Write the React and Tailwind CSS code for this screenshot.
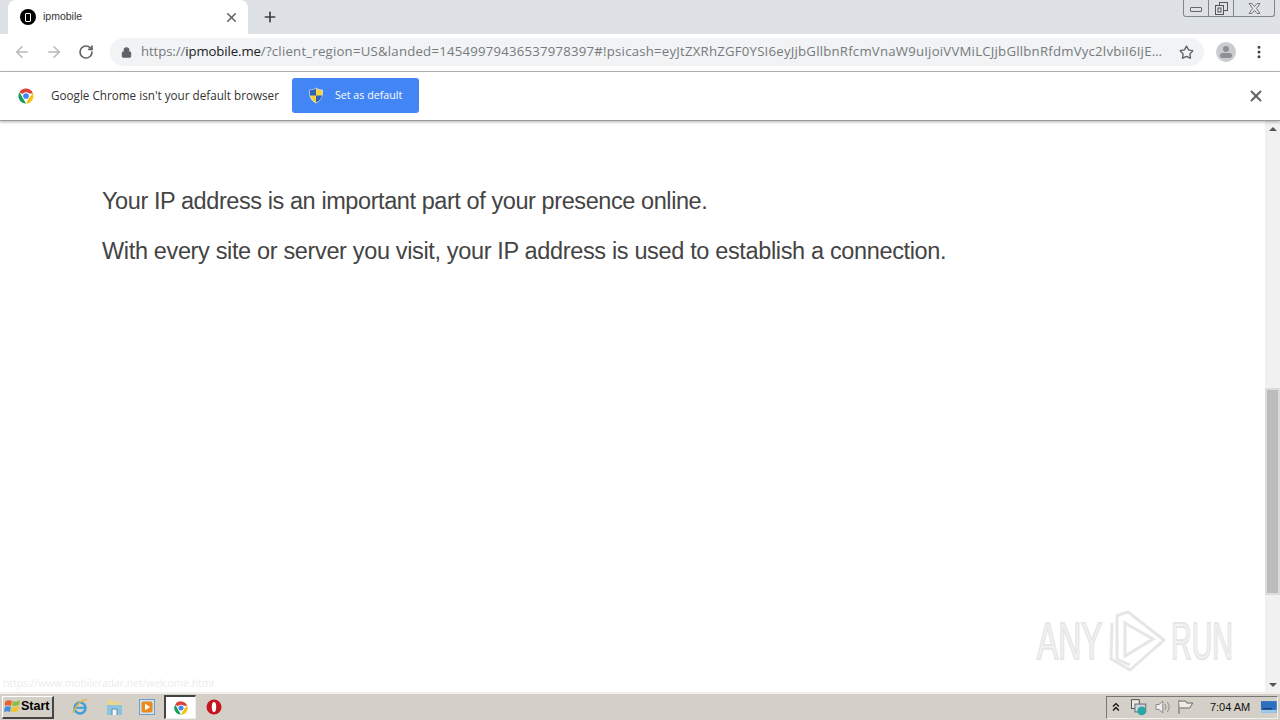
import { ArrowLeft, ArrowRight, RotateCw, Lock, Star, X, Plus, EllipsisVertical } from "lucide-react";

const URL_REST =
  "/?client_region=US&landed=14549979436537978397#!psicash=eyJtZXRhZGF0YSI6eyJjbGllbnRfcmVnaW9uIjoiVVMiLCJjbGllbnRfdmVyc2lvbiI6IjE…";

function ChromeLogo({ size = 18 }) {
  return (
    <svg width={size} height={size} viewBox="0 0 24 24">
      <path d="M12 12 L3.3 7 A10 10 0 0 1 21.3 8.5 L12 8.5 Z" fill="#db4437" />
      <path d="M12 22 A10 10 0 0 1 3.3 7 L8 15 Z" fill="#0f9d58" />
      <path d="M21.3 8.5 A10 10 0 0 1 12 22 L16 14 Z" fill="#f4c20d" />
      <circle cx="12" cy="12" r="5" fill="#fff" />
      <circle cx="12" cy="12" r="3.8" fill="#4285f4" />
    </svg>
  );
}

function ShieldIcon() {
  return (
    <svg width="16" height="17" viewBox="0 0 16 17">
      <path d="M8 1 C10 2.5 12 3 14.5 3 C15 9 13 13.5 8 16 C3 13.5 1 9 1.5 3 C4 3 6 2.5 8 1 Z" fill="#f6d23c" stroke="#dbe6f5" strokeWidth="0.8" />
      <path d="M8 1.6 V8.5 H2 C1.7 7 1.7 5 1.8 3.3 C4 3.3 6 2.8 8 1.6 Z" fill="#2f62b8" />
      <path d="M8 8.5 H14 C13.4 11.5 11.4 14 8 15.6 Z" fill="#2f62b8" />
    </svg>
  );
}

function Watermark() {
  return (
    <div className="absolute left-[1037px] top-[609px] flex h-[63px] items-center">
      <span className="w-[71px] origin-left scale-x-[0.61] font-['Liberation_Sans',sans-serif] text-[52px] leading-none text-[#f4f4f4] [-webkit-text-stroke:2px_#e6e6e6]">
        ANY
      </span>
      <svg width="58" height="63" viewBox="0 0 58 63" fill="none" stroke="#e6e6e6" strokeWidth="3">
        <path d="M4 14 L3 50 L22 61 L56 31 L20 3 L8 7" />
        <path d="M9 8 L9 50 L22 56" />
        <path d="M17 14 L17 47 L45 30 Z" />
      </svg>
      <span className="ml-[5px] w-[62px] origin-left scale-x-[0.55] font-['Liberation_Sans',sans-serif] text-[52px] leading-none text-[#f4f4f4] [-webkit-text-stroke:2px_#e6e6e6]">
        RUN
      </span>
    </div>
  );
}

function TaskbarIcons() {
  return (
    <div className="ml-[17px] flex items-center">
      {/* ie */}
      <div className="flex w-[18px] justify-center">
        <svg width="18" height="18" viewBox="0 0 18 18" fill="none">
          <circle cx="9" cy="10" r="5.5" stroke="#3f9fdc" strokeWidth="2.5" />
          <path d="M3 9.8 H15" stroke="#3f9fdc" strokeWidth="2" />
          <path d="M2 15 C6 5 12 1 16 2" stroke="#e5b53a" strokeWidth="1.5" />
        </svg>
      </div>
      {/* explorer */}
      <div className="ml-[16px] flex w-[18px] justify-center">
        <svg width="17" height="17" viewBox="0 0 17 17">
          <path d="M2 1 H7 L8.5 3 H15 V15 H2 Z" fill="#ecd58a" />
          <path d="M1 6 H16 V16 H1 Z" fill="#8cc4de" />
          <path d="M6 16 V10 H11 V16" fill="#f3f3f3" stroke="#5b8fb0" />
        </svg>
      </div>
      {/* media player */}
      <div className="ml-[15px] flex w-[18px] justify-center">
        <svg width="16" height="16" viewBox="0 0 16 16">
          <rect x="0.5" y="0.5" width="15" height="15" fill="#cfe2f3" stroke="#6f9fc8" />
          <rect x="2.5" y="2.5" width="11" height="11" rx="2" fill="#ea8a1c" />
          <path d="M6 4.8 L11.2 8 L6 11.2 Z" fill="#fff" />
        </svg>
      </div>
      {/* chrome, active */}
      <div className="ml-[8px] flex h-[24px] w-[32px] items-center justify-center border-2 border-b border-r border-t-[#444] border-l-[#444] border-r-[#eee] border-b-[#eee] bg-white">
        <ChromeLogo size={16} />
      </div>
      {/* opera */}
      <div className="ml-[10px] flex w-[16px] justify-center">
        <svg width="16" height="16" viewBox="0 0 16 16">
          <circle cx="8" cy="8" r="7.5" fill="#c4161c" />
          <ellipse cx="8" cy="8" rx="2.2" ry="5" fill="#fff" />
        </svg>
      </div>
    </div>
  );
}

function Tray() {
  return (
    <div className="mr-[2px] flex h-[23px] w-[172px] items-center border border-b-[#f3f1ec] border-r-[#f3f1ec] border-l-[#777] border-t-[#777] pl-[4px]">
      <svg width="10" height="10" viewBox="0 0 10 10" fill="none" stroke="#111" strokeWidth="1.3">
        <path d="M2 4.5 L5 1.5 L8 4.5" />
        <path d="M2 8.5 L5 5.5 L8 8.5" />
      </svg>
      {/* network */}
      <svg className="ml-[9px]" width="18" height="18" viewBox="0 0 18 18">
        <rect x="1.5" y="1.5" width="8" height="9" fill="#e9e9e2" stroke="#555" />
        <rect x="5" y="6" width="11" height="8" fill="#cfd6d8" stroke="#667" />
        <circle cx="12" cy="13" r="4.5" fill="#2aa6a6" />
      </svg>
      {/* speaker */}
      <svg className="ml-[6px]" width="18" height="16" viewBox="0 0 18 16" fill="none" stroke="#888">
        <path d="M2 5.5 H5 L9 2 V14 L5 10.5 H2 Z" fill="#eee" />
        <path d="M11 5 C12.5 7 12.5 9 11 11" />
        <path d="M13.5 3 C16 6 16 10 13.5 13" />
      </svg>
      {/* flag */}
      <svg className="ml-[6px]" width="17" height="16" viewBox="0 0 17 16" fill="none" stroke="#666">
        <path d="M2 1 V15" />
        <path d="M2 2 H9 L10 4 H16 L13 9 H3" fill="#eeece6" />
      </svg>
      <span className="ml-[16px] whitespace-nowrap font-['Liberation_Sans',sans-serif] text-[11px] text-[#111]">7:04 AM</span>
      <svg className="ml-[11px]" width="16" height="13" viewBox="0 0 16 13">
        <rect width="16" height="12" fill="#2b6fc0" />
        <rect y="9" width="16" height="3" fill="#9ccbea" />
        <rect x="2" y="7" width="9" height="1.5" fill="#1b3f77" />
      </svg>
    </div>
  );
}

export default function App() {
  return (
    <div className="relative flex h-[720px] w-[1280px] flex-col overflow-hidden bg-white font-['Liberation_Sans',sans-serif]">
      {/* tab strip */}
      <div className="relative flex h-[34px] shrink-0 items-center bg-[#dee1e6] pl-2">
        <div className="flex h-[34px] w-[240px] items-center rounded-t-lg bg-white pl-3 pr-[4px]">
          <div className="flex h-[16px] w-[16px] items-center justify-center rounded-full bg-black">
            <div className="h-[9px] w-[6px] rounded-[1px] border border-white" />
          </div>
          <span className="ml-[7px] font-['Liberation_Sans',sans-serif] text-[10.5px] text-[#333]">ipmobile</span>
          <X className="ml-auto mr-[5px] text-[#5f6368]" size={15} strokeWidth={2.5} />
        </div>
        <Plus className="ml-[14px] text-[#3c4043]" size={16} strokeWidth={2.5} />
        {/* window buttons */}
        <div className="absolute right-[5px] top-0 flex h-[17px] w-[92px] rounded-b-[3px] border border-t-0 border-[#7d8590]">
          <div className="flex w-[25px] items-center justify-center border-r border-[#7d8590] pt-[2px]">
            <div className="h-[5px] w-[12px] rounded-[1px] border border-[#666]" />
          </div>
          <div className="flex w-[25px] items-center justify-center border-r border-[#7d8590]">
            <svg width="13" height="13" viewBox="0 0 13 13" fill="none" stroke="#555">
              <rect x="4.5" y="0.5" width="8" height="8" />
              <rect x="0.5" y="3.5" width="8" height="9" fill="#dee1e6" />
              <rect x="3" y="6" width="3" height="4" />
            </svg>
          </div>
          <div className="flex flex-1 items-center justify-center">
            <svg width="13" height="11" viewBox="0 0 13 11" fill="none" stroke="#777">
              <path d="M1 0.5 H4 L6.5 3.5 L9 0.5 H12 L8.5 5.5 L12 10.5 H9 L6.5 7.5 L4 10.5 H1 L4.5 5.5 Z" />
            </svg>
          </div>
        </div>
      </div>

      {/* toolbar */}
      <div className="flex h-[38px] shrink-0 items-center border-b border-[#b8b8b8] bg-white pb-[1px] pl-[13px]">
        <ArrowLeft className="text-[#b5b8bc]" size={18} strokeWidth={2} />
        <ArrowRight className="ml-[14px] text-[#b5b8bc]" size={18} strokeWidth={2} />
        <RotateCw className="ml-[15px] text-[#5f6368]" size={16} strokeWidth={2.5} />
        <div className="ml-[16px] flex h-[28px] w-[1094px] items-center rounded-full bg-[#f1f3f4] pl-[11px]">
          <Lock className="shrink-0 fill-[#5f6368] text-[#5f6368]" size={11} strokeWidth={2.5} />
          <div className="ml-[9px] whitespace-nowrap font-['Open_Sans',sans-serif] text-[13.2px] tracking-[-0.1px] text-[#777a7e]">
            https://<span className="text-[#202124]">ipmobile.me</span>
            <span className="tracking-[0.22px]">{URL_REST}</span>
          </div>
          <Star className="ml-auto mr-[10px] shrink-0 text-[#5f6368]" size={15} strokeWidth={2.2} />
        </div>
        <div className="ml-[12px] flex h-[20px] w-[20px] flex-col items-center justify-center rounded-full bg-[#c9cccf]">
          <div className="h-[6px] w-[6px] rounded-full bg-[#8d9094]" />
          <div className="mt-[1px] h-[5px] w-[12px] rounded-full bg-[#8d9094]" />
        </div>
        <EllipsisVertical className="ml-[15px] text-[#444]" size={16} strokeWidth={2.5} />
      </div>

      {/* default browser bar */}
      <div className="z-10 flex h-[49px] shrink-0 items-center border-b border-[#9a9a9a] bg-white pb-[1px] pl-[17px] shadow-[0_1px_3px_rgba(0,0,0,0.3)]">
        <ChromeLogo size={18} />
        <span className="ml-[16px] font-['Open_Sans',sans-serif] text-[11.7px] text-[#333]">Google Chrome isn't your default browser</span>
        <div className="ml-[13px] flex h-[35px] w-[127px] items-center rounded-[3px] bg-[#4285f4] pl-[16px]">
          <ShieldIcon />
          <span className="ml-[11px] font-['Open_Sans',sans-serif] text-[10.7px] text-white">Set as default</span>
        </div>
        <X className="ml-auto mr-[15px] text-[#5f6368]" size={18} strokeWidth={2.6} />
      </div>

      {/* page body */}
      <div className="flex min-h-0 flex-1">
        <div className="flex-1 pl-[102px] pt-[55px] text-[23.5px] leading-[50px] tracking-[-0.35px] text-[#444]">
          <p className="tracking-[-0.42px]">Your IP address is an important part of your presence online.</p>
          <p>With every site or server you visit, your IP address is used to establish a connection.</p>
        </div>
        {/* scrollbar */}
        <div className="flex w-[15px] shrink-0 flex-col bg-[#f1f1f1]">
          <div className="flex h-[15px] items-center justify-center">
            <div className="h-0 w-0 border-x-[4px] border-b-[4px] border-x-transparent border-b-[#555]" />
          </div>
          <div className="mt-[252px] h-[207px] border-2 border-[#dcdcdc] bg-[#bcbcbc]" />
          <div className="mt-auto flex h-[15px] items-center justify-center">
            <div className="h-0 w-0 border-x-[4px] border-t-[4px] border-x-transparent border-t-[#555]" />
          </div>
        </div>
      </div>

      <div className="absolute bottom-[29px] left-[3px] font-['Open_Sans',sans-serif] text-[10.3px] text-[#ececec]">https://www.mobileradar.net/welcome.html</div>
      <Watermark />

      {/* taskbar */}
      <div className="flex h-[28px] shrink-0 items-center border-t-2 border-[#f0eee8] bg-[#d4d0c8]">
        <div className="ml-[2px] flex h-[23px] w-[52px] items-center border border-b-2 border-r-2 border-b-[#444] border-r-[#444] border-l-white border-t-white bg-[#d4d0c8] pl-[1px]">
          <svg width="17" height="17" viewBox="0 0 17 17">
            <path d="M1 4 C3 2 5 2 8 3 L7 8 C5 7 3 7 1 8 Z" fill="#e8642c" />
            <path d="M9 3 C11 4 13 4 16 2 L15 7 C13 8 10 8 8 8 Z" fill="#8cbf3f" />
            <path d="M1 9 C3 8 5 8 7 9 L6 14 C4 13 2 13 0 14 Z" fill="#3f8fdc" />
            <path d="M8 9 C10 9 13 9 15 8 L14 13 C12 14 9 14 7 14 Z" fill="#f2c230" />
          </svg>
          <span className="font-['Liberation_Sans',sans-serif] text-[12.5px] font-bold text-black">Start</span>
        </div>
        <TaskbarIcons />
        <div className="ml-auto">
          <Tray />
        </div>
      </div>
    </div>
  );
}
